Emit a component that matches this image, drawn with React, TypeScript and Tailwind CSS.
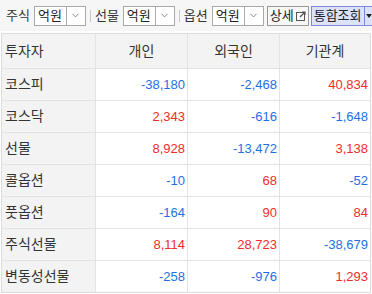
import { ChevronDown } from 'lucide-react';

type Row = { name: string; values: number[] };

const ROWS: Row[] = [
  { name: '코스피', values: [-38180, -2468, 40834] },
  { name: '코스닥', values: [2343, -616, -1648] },
  { name: '선물', values: [8928, -13472, 3138] },
  { name: '콜옵션', values: [-10, 68, -52] },
  { name: '풋옵션', values: [-164, 90, 84] },
  { name: '주식선물', values: [8114, 28723, -38679] },
  { name: '변동성선물', values: [-258, -976, 1293] },
];

const fmt = (n: number) => n.toLocaleString('en-US');

// 단위 선택 박스
function UnitSelect() {
  return (
    <div className="flex h-[20px] w-[52px] flex-none items-stretch border border-[#a9a9a9] bg-white">
      <span className="flex flex-1 items-center whitespace-nowrap pl-[3px] text-[13px] leading-none text-[#222]">억원</span>
      <span className="flex w-[19px] flex-none items-center justify-center border-l border-[#a9a9a9]">
        <ChevronDown className="h-[11px] w-[11px] text-[#555]" strokeWidth={1.5} />
      </span>
    </div>
  );
}

function Label({ text }: { text: string }) {
  return <span className="mr-[4px] flex-none whitespace-nowrap text-[13px] text-[#333]">{text}</span>;
}

function Sep() {
  return <span className="mx-[4px] h-[12px] w-px flex-none bg-[#c8c8c8]" />;
}

export default function App() {
  return (
    <div
      className="h-[294px] w-[372px] overflow-hidden bg-white text-[#333]"
      style={{ fontFamily: '"Liberation Sans", "Noto Sans CJK KR", sans-serif' }}
    >
      {/* 상단 필터 */}
      <div className="flex h-[31px] items-center whitespace-nowrap bg-[#f6f6f6] pl-[6px]">
        <Label text="주식" />
        <UnitSelect />
        <Sep />
        <Label text="선물" />
        <UnitSelect />
        <Sep />
        <Label text="옵션" />
        <UnitSelect />
        <button className="ml-[3px] flex h-[20px] flex-none items-center gap-[2px] border border-[#999] bg-[#f8f8f8] px-[2px] text-[13px] leading-none text-[#222]">
          상세
          <svg width="10" height="10" viewBox="0 0 10 10" className="mt-[1px]">
            <rect x="0.5" y="1.5" width="8" height="8" fill="none" stroke="#555" strokeWidth="1" />
            <path d="M4 6 L9 1 M6 1 H9 V4" fill="none" stroke="#555" strokeWidth="1.2" />
          </svg>
        </button>
        <button className="ml-[2px] flex h-[20px] flex-none items-stretch border border-[#7d8ad6] bg-[#dde2fb] text-[13px] leading-none text-[#222]">
          <span className="flex items-center px-[2px]">통합조회</span>
          <span className="flex w-[10px] items-center justify-center border-l border-[#7d8ad6]">
            <svg width="6" height="4" viewBox="0 0 6 4">
              <path d="M0 0 H6 L3 4 Z" fill="#222" />
            </svg>
          </span>
        </button>
      </div>

      {/* 투자자별 매매동향 */}
      <div className="ml-px mt-[2px] w-[370px] border border-[#dcdcdc] text-[13px]">
        <div className="grid h-[34px] grid-cols-[93px_92px_92px_1fr] bg-[#f3f3f3] text-[14px] text-[#333]">
          <div className="flex items-center pl-[3px]">투자자</div>
          <div className="flex items-center justify-center border-l border-[#e3e3e3]">개인</div>
          <div className="flex items-center justify-center border-l border-[#e3e3e3]">외국인</div>
          <div className="flex items-center justify-center border-l border-[#e3e3e3]">기관계</div>
        </div>
        {ROWS.map((row) => (
          <div
            key={row.name}
            className="grid h-[32px] grid-cols-[93px_92px_92px_1fr] border-t border-[#e3e3e3]"
          >
            <div className="flex items-center bg-[#f3f3f3] pl-[3px] text-[14px] text-[#333]">{row.name}</div>
            {row.values.map((v, i) => (
              <div
                key={i}
                className={
                  'flex items-center justify-end border-l border-[#e3e3e3] pr-[2px] ' +
                  (v < 0 ? 'text-[#1f6fe5]' : 'text-[#f02c2c]')
                }
              >
                {fmt(v)}
              </div>
            ))}
          </div>
        ))}
      </div>
    </div>
  );
}
